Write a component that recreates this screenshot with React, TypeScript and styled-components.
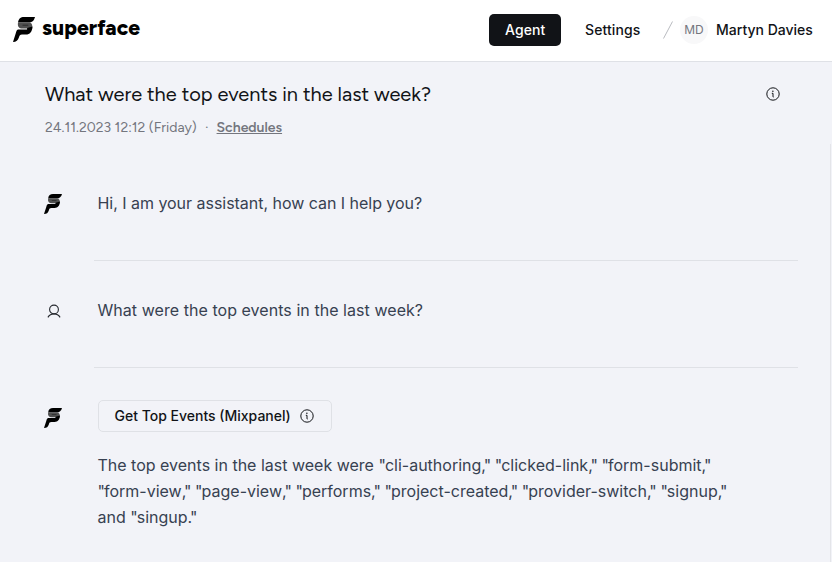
import React from "react";
import styled, { createGlobalStyle } from "styled-components";

const Global = createGlobalStyle`
  * { box-sizing: border-box; }
  body { margin: 0; background: #f2f3f8; font-family: Inter, sans-serif; color: #111317; overflow: hidden; }
`;

const Page = styled.div`
  height: 562px;
  display: flex;
  flex-direction: column;
`;
const Header = styled.header`
  height: 62px;
  flex: none;
  display: flex;
  align-items: center;
  justify-content: space-between;
  padding: 0 19px 2px 13px;
  background: #fff;
  border-bottom: 1px solid #dfe1e6;
`;
const Brand = styled.div`
  display: flex;
  align-items: center;
  gap: 7px;
`;
const Wordmark = styled.span`
  font: 800 21px/24px Figtree, Lato, sans-serif;
  letter-spacing: 0.05px;
  color: #000;
  margin-top: -3px;
`;
const Nav = styled.nav`
  display: flex;
  align-items: center;
  font-size: 14px;
  font-weight: 500;
`;
const NavItem = styled.a<{ $active?: boolean }>`
  height: 32px;
  width: ${(p) => (p.$active ? "72px" : "102px")};
  padding-left: ${(p) => (p.$active ? "16px" : "24px")};
  line-height: 32px;
  border-radius: 5px;
  letter-spacing: 0.1px;
  color: ${(p) => (p.$active ? "#fff" : "#111317")};
  background: ${(p) => (p.$active ? "#111317" : "transparent")};
`;
const Avatar = styled.span`
  width: 28px;
  height: 28px;
  margin: 0 8px 0 7px;
  border-radius: 50%;
  background: #f8f8f9;
  color: #74767e;
  font-size: 12px;
  font-weight: 400;
  line-height: 28px;
  text-align: center;
`;
const UserName = styled.span`
  width: 97px;
  white-space: nowrap;
`;
const Heading = styled.section`
  height: 82px;
  flex: none;
  display: flex;
  justify-content: space-between;
  padding: 18px 52px 0 45px;
  font-family: Figtree, Lato, sans-serif;
`;
const Title = styled.h1`
  margin: 0;
  font-size: 20px;
  font-weight: 400;
  line-height: 28px;
`;
const Meta = styled.div`
  display: flex;
  margin-top: 10px;
  font-size: 14px;
  line-height: 20px;
  color: #74767e;
`;
const DateText = styled.span`
  width: 160px;
`;
const Schedules = styled.a`
  margin-left: 8px;
  font-weight: 600;
  text-decoration: underline;
`;
const InfoSlot = styled.div`
  padding-top: 7px;
`;
const Conversation = styled.main`
  flex: 1;
  margin-right: 1px;
  padding: 10px 32px 0 44px;
  border-right: 1px solid #e4e5e9;
`;
const Row = styled.article<{ $answer?: boolean }>`
  display: grid;
  grid-template-columns: 50px 1fr;
  height: ${(p) => (p.$answer ? "auto" : "107px")};
`;
const Marker = styled.div`
  padding-top: 40px;
`;
const Body = styled.div<{ $answer?: boolean }>`
  padding: ${(p) => (p.$answer ? "32px 4px 0" : "36px 4px 0")};
  border-bottom: ${(p) => (p.$answer ? "0" : "1px solid #dfe1e6")};
`;
const Text = styled.p<{ $tracking?: string }>`
  margin: 0 0 0 -0.5px;
  font-size: 16px;
  line-height: 26px;
  letter-spacing: ${(p) => p.$tracking ?? "normal"};
  color: #374151;
  white-space: nowrap;
`;
const Quote = styled.span<{ $closing: boolean }>`
  letter-spacing: ${(p) => (p.$closing ? "-0.9px" : "-1px")};
`;
const ToolButton = styled.button`
  width: 234px;
  height: 32px;
  margin: 0 0 20px;
  padding: 0 17px 0 15.5px;
  display: flex;
  align-items: center;
  justify-content: space-between;
  border: 1px solid #dfe1e6;
  border-radius: 5px;
  background: transparent;
  color: #111317;
  font: 500 14px/20px Inter, sans-serif;
  white-space: nowrap;
`;

const Logo = ({ width, height }: { width: number; height: number }) => (
  <svg width={width} height={height} viewBox="0 0 22 25" preserveAspectRatio="none" style={{ display: "block" }}>
    <path d="M22 0H11C7.5 0 5.7 1.5 5 5.5h10.5c3.5 0 5.5-1.6 6.5-5.5Z" fill="#000" />
    <path d="M5 5.5c-.7 4 1 6 4.5 6H14V13l5-1c1-4.5-.5-6.5-3.5-6.5Z" fill="#505050" />
    <path d="M9.5 8.2h5.8" stroke="#222" strokeWidth=".8" />
    <path d="M5 12.5h9.2V11l5.3-1.5c-.3 5.5-2.7 8-6.5 8H9c-2 0-2.5 1-3.1 3C4.8 23.4 3.4 25 0 25l2.7-8.5c.7-2.4.9-3.4 2.3-4Z" fill="#000" />
  </svg>
);
const InfoIcon = () => (
  <svg width="14" height="14" viewBox="0 0 14 14" fill="none" stroke="#111317" strokeWidth="1" style={{ display: "block" }}>
    <circle cx="7" cy="7" r="6.2" />
    <path d="M5.8 6.3H7V9.6c0 .3.3.5.8.5" />
    <circle cx="6.9" cy="4.2" r=".75" fill="#111317" stroke="none" />
  </svg>
);
const UserIcon = () => (
  <svg width="20" height="20" viewBox="0 0 20 20" fill="none" stroke="#272a30" strokeWidth="1.1">
    <circle cx="10" cy="8.5" r="4.4" />
    <path d="M3.9 16.4c1.4-2.3 3.5-3.5 6.1-3.5s4.7 1.2 6.1 3.5" />
  </svg>
);

const Quoted = ({ text }: { text: string }) => (
  <>
    {text.split(/([,.]?")/).map((part, i) =>
      i % 2 ? (
        <Quote key={i} $closing={part.length > 1}>{part}</Quote>
      ) : (
        part
      )
    )}
  </>
);

export default function App() {
  return (
    <Page>
      <Global />
      <Header>
        <Brand>
          <Logo width={22} height={25} />
          <Wordmark>superface</Wordmark>
        </Brand>
        <Nav>
          <NavItem $active>Agent</NavItem>
          <NavItem>Settings</NavItem>
          <svg width="10" height="18" viewBox="0 0 10 18">
            <path d="M.5 17.5 9.5.5" stroke="#b9bbc0" />
          </svg>
          <Avatar>MD</Avatar>
          <UserName>Martyn Davies</UserName>
        </Nav>
      </Header>
      <Heading>
        <div>
          <Title>What were the top events in the last week?</Title>
          <Meta>
            <DateText>24.11.2023 12:12 (Friday)</DateText>
            <span>·</span>
            <Schedules>Schedules</Schedules>
          </Meta>
        </div>
        <InfoSlot><InfoIcon /></InfoSlot>
      </Heading>
      <Conversation>
        <Row>
          <Marker><Logo width={18} height={20} /></Marker>
          <Body><Text $tracking="-0.03px">Hi, I am your assistant, how can I help you?</Text></Body>
        </Row>
        <Row>
          <Marker><UserIcon /></Marker>
          <Body><Text $tracking="0.05px">What were the top events in the last week?</Text></Body>
        </Row>
        <Row $answer>
          <Marker><Logo width={18} height={20} /></Marker>
          <Body $answer>
            <ToolButton>Get Top Events (Mixpanel)<InfoIcon /></ToolButton>
            <Text>
              <Quoted text={'The top events in the last week were "cli-authoring," "clicked-link," "form-submit,"'} /><br />
              <Quoted text={'"form-view," "page-view," "performs," "project-created," "provider-switch," "signup,"'} /><br />
              <Quoted text={'and "singup."'} />
            </Text>
          </Body>
        </Row>
      </Conversation>
    </Page>
  );
}
